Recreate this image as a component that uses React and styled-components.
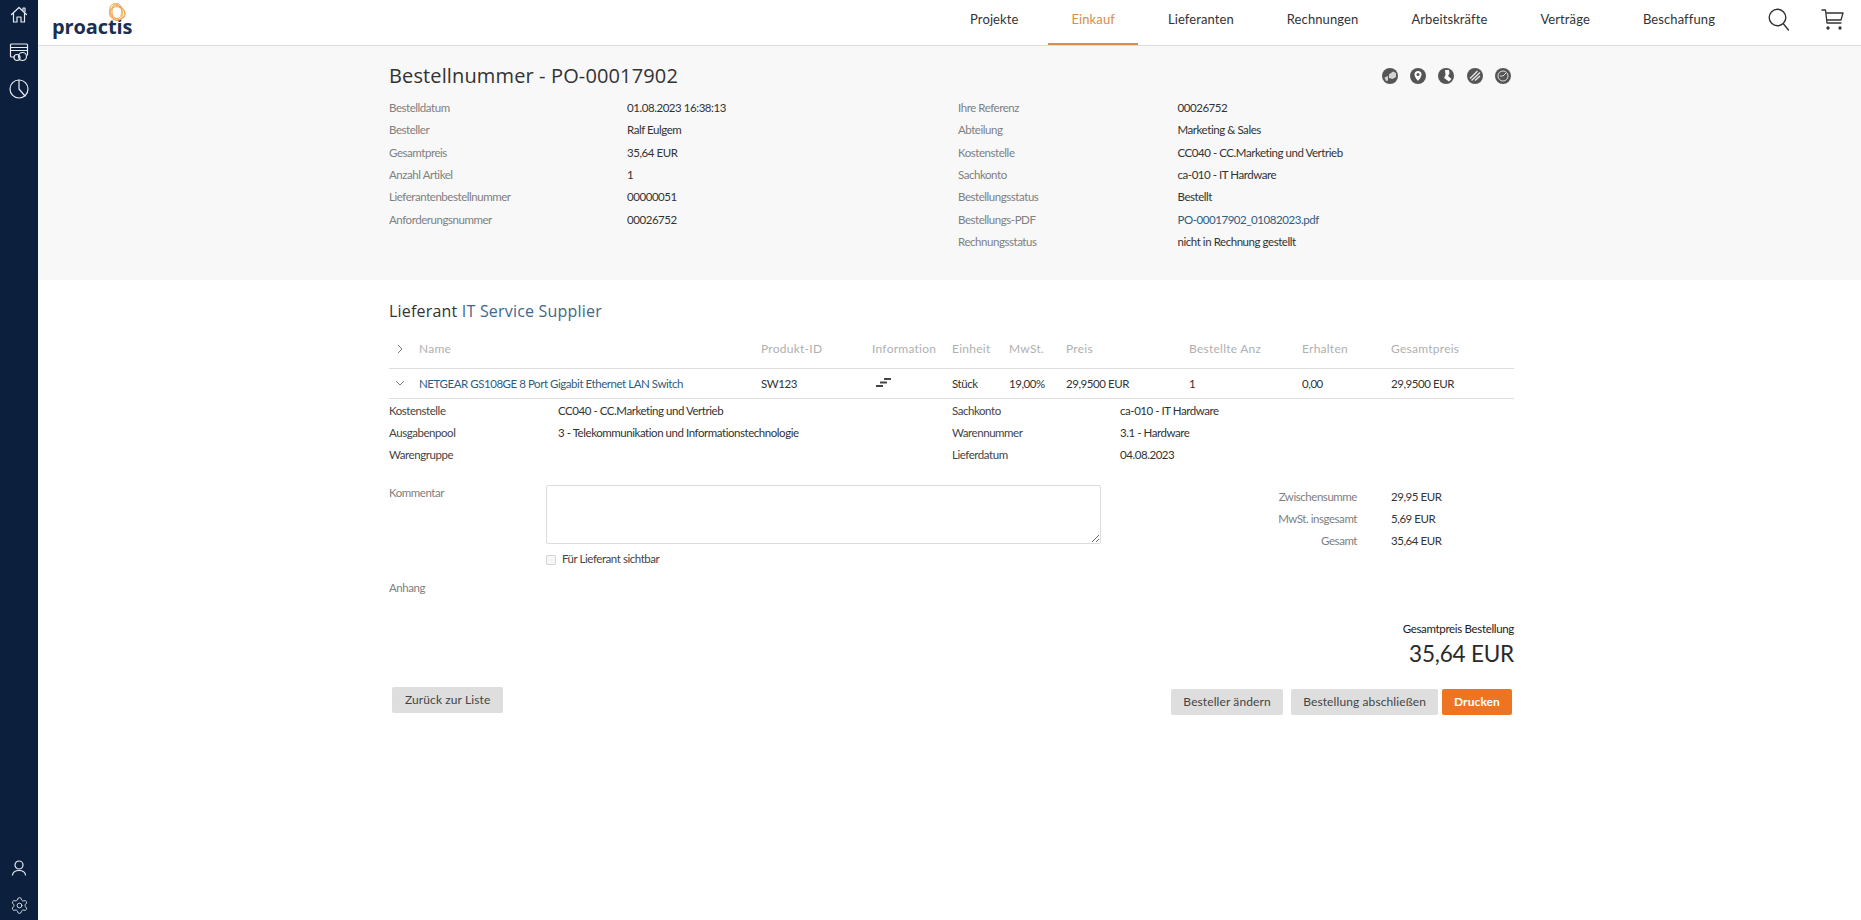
import React from "react";
import styled, { createGlobalStyle } from "styled-components";
import { Settings } from "lucide-react";

const GlobalStyle = createGlobalStyle`
  html, body {
    margin: 0;
    padding: 0;
    background: #fff;
    font-family: "Lato", "Liberation Sans", sans-serif;
    font-size: 11.5px;
    letter-spacing: -0.45px;
    color: #333;
  }
  * { box-sizing: border-box; }
`;

const Page = styled.div`
  display: flex;
  min-height: 100vh;
`;

const Sidebar = styled.aside`
  width: 38px;
  flex: none;
  height: 100vh;
  background: #0c1f3d;
  color: #e8ecf2;
  display: flex;
  flex-direction: column;
  justify-content: space-between;
  align-items: center;
  padding: 5px 0;
`;

const SideGroup = styled.div`
  display: flex;
  flex-direction: column;
  align-items: center;
  gap: ${(p) => p.$gap}px;
`;

const Main = styled.main`
  flex: 1;
  min-width: 0;
`;

const Header = styled.header`
  height: 46px;
  border-bottom: 1px solid #dcdcdc;
  display: flex;
  align-items: stretch;
  padding: 0 17px 0 14px;
`;

const Logo = styled.div`
  position: relative;
  width: 80px;
  font-family: "Open Sans", "Lato", sans-serif;
  font-size: 20px;
  line-height: 26px;
  font-weight: 700;
  letter-spacing: -0.1px;
  color: #1a2f50;
  padding-top: 14px;
`;

const LogoRings = styled.svg`
  position: absolute;
  left: 55px;
  top: 2px;
`;

const Nav = styled.nav`
  margin-left: auto;
  display: flex;
  gap: 7px;
`;

const NavItem = styled.a`
  padding: 0 23px;
  height: 45px;
  line-height: 39px;
  font-size: 13px;
  letter-spacing: 0.1px;
  color: ${(p) => (p.$active ? "#d98d45" : "#333")};
  border-bottom: 2px solid ${(p) => (p.$active ? "#d6904b" : "transparent")};
`;

const HeaderIcons = styled.div`
  display: flex;
  align-items: center;
  gap: 31px;
  margin: 0 0 6px 30px;
`;

const OrderPanel = styled.section`
  background: #f8f8f8;
  height: 234px;
  padding-top: 15px;
`;

const Inner = styled.div`
  width: 1125px;
  margin-left: 351px;
`;

const TitleRow = styled.div`
  display: flex;
  align-items: center;
  justify-content: space-between;
  height: 29px;
  padding-right: 3px;
  margin-bottom: 6.5px;
`;

const Title = styled.h1`
  margin: 0;
  font-family: "Open Sans", sans-serif;
  font-size: 20px;
  font-weight: 400;
  letter-spacing: 0.13px;
  color: #333;
`;

const ActionIcons = styled.div`
  display: flex;
  gap: 12.3px;
`;

const MetaColumns = styled.div`
  display: grid;
  grid-template-columns: 569px 1fr;
`;

const MetaList = styled.dl`
  margin: 0;
  display: grid;
  grid-template-columns: ${(p) => p.$label}px 1fr;
  grid-auto-rows: 22.33px;
  align-items: center;
`;

const MetaLabel = styled.dt`
  color: ${(p) => (p.$dark ? "#444" : "#808080")};
`;

const MetaValue = styled.dd`
  margin: 0;
  color: #333;
`;

const Link = styled.a`
  color: #2f5d7f;
`;

const SupplierTitle = styled.h2`
  margin: 20px 0 8px;
  height: 22px;
  line-height: 22px;
  font-family: "Open Sans", sans-serif;
  font-size: 16px;
  font-weight: 400;
  letter-spacing: 0.2px;
  color: #333;
`;

const SupplierName = styled.span`
  color: #41688a;
`;

const TableRow = styled.div`
  display: grid;
  grid-template-columns: 30px 342px 111px 80px 57px 57px 123px 113px 89px 123px;
  align-items: center;
  height: ${(p) => p.$height}px;
  padding-bottom: 1px;
  border-bottom: 1px solid #dedede;
  font-size: ${(p) => (p.$head ? "12px" : "inherit")};
  color: ${(p) => (p.$head ? "#b0b0b0" : "#333")};
  letter-spacing: ${(p) => (p.$head ? "0.25px" : "inherit")};
`;

const Chevron = styled.svg`
  margin-left: 6px;
  display: block;
`;

const InfoBars = styled.svg`
  margin-left: 4px;
`;

const Details = styled.div`
  display: grid;
  grid-template-columns: 563px 1fr;
`;

const CommentArea = styled.div`
  display: grid;
  grid-template-columns: 157px 555px 1fr;
  margin-top: 19px;
`;

const GreyLabel = styled.div`
  color: #808080;
  line-height: 14px;
  padding-top: ${(p) => p.$top || 0}px;
`;

const Comment = styled.textarea`
  display: block;
  width: 100%;
  height: 59px;
  border: 1px solid #dcdcdc;
  border-radius: 2px;
  background: #fff;
  margin: 0;
`;

const CheckRow = styled.label`
  display: flex;
  align-items: center;
  gap: 6px;
  height: 20px;
  margin-top: 5px;
  color: #444;
`;

const Check = styled.input`
  appearance: none;
  width: 10px;
  height: 10px;
  margin: 2px 0 0;
  border: 1px solid #d5d5d5;
  background: #f6f6f6;
  border-radius: 1px;
`;

const Totals = styled.dl`
  margin: 0;
  display: grid;
  grid-template-columns: 256px 1fr;
  column-gap: 34px;
  grid-auto-rows: 22.33px;
  align-items: center;
`;

const TotalLabel = styled.dt`
  color: #808080;
  text-align: right;
`;

const Attachment = styled(GreyLabel)`
  margin-top: 12px;
`;

const Grand = styled.div`
  text-align: right;
  margin-top: 25px;
`;

const GrandLabel = styled.div`
  line-height: 18px;
  letter-spacing: -0.33px;
  color: #222;
`;

const GrandValue = styled.div`
  font-size: 22.5px;
  line-height: 30px;
  font-weight: 400;
  letter-spacing: -0.2px;
  color: #2a2a2a;
  padding-top: 1px;
`;

const Actions = styled.div`
  display: flex;
  justify-content: space-between;
  align-items: flex-start;
  margin-top: 18px;
  padding: 0 2px 0 3px;
`;

const ButtonGroup = styled.div`
  display: flex;
  gap: ${(p) => p.$gap || 0}px;
  margin-top: ${(p) => p.$top || 0}px;
`;

const Button = styled.button`
  height: 26px;
  margin-left: ${(p) => p.$left || 0}px;
  padding: 0 ${(p) => p.$pad || 13}px;
  border: 0;
  border-radius: 2px;
  font-family: inherit;
  font-size: 12px;
  letter-spacing: 0.1px;
  background: ${(p) => (p.$primary ? "#ec7423" : "#dedede")};
  color: ${(p) => (p.$primary ? "#fff" : "#444")};
  font-weight: ${(p) => (p.$primary ? 700 : 400)};
`;

const metaLeft = [
  ["Bestelldatum", "01.08.2023 16:38:13"],
  ["Besteller", "Ralf Eulgem"],
  ["Gesamtpreis", "35,64 EUR"],
  ["Anzahl Artikel", "1"],
  ["Lieferantenbestellnummer", "00000051"],
  ["Anforderungsnummer", "00026752"],
];

const metaRight = [
  ["Ihre Referenz", "00026752"],
  ["Abteilung", "Marketing & Sales"],
  ["Kostenstelle", "CC040 - CC.Marketing und Vertrieb"],
  ["Sachkonto", "ca-010 - IT Hardware"],
  ["Bestellungsstatus", "Bestellt"],
  ["Bestellungs-PDF", <Link key="pdf">PO-00017902_01082023.pdf</Link>],
  ["Rechnungsstatus", "nicht in Rechnung gestellt"],
];

const navItems = ["Projekte", "Einkauf", "Lieferanten", "Rechnungen", "Arbeitskräfte", "Verträge", "Beschaffung"];
const headCols = ["Name", "Produkt-ID", "Information", "Einheit", "MwSt.", "Preis", "Bestellte Anz", "Erhalten", "Gesamtpreis"];

const thin = { fill: "none", stroke: "currentColor", strokeWidth: 1.2, strokeLinecap: "round", strokeLinejoin: "round" };

const HomeIcon = () => (
  <svg width="20" height="20" viewBox="0 0 20 20" {...thin}>
    <path d="M2.5 9.5 10 2.5l7.5 7M14 5V3h2v3.5M4.5 8.5V17H8v-5h4v5h3.5V8.5" />
  </svg>
);

const CardIcon = () => (
  <svg width="20" height="20" viewBox="0 0 20 20" {...thin}>
    <path d="M5 15H2.500a1 1 0 0 1-1-1V3a1 1 0 0 1 1-1h15a1 1 0 0 1 1 1v10M1.500 5.500h17M1.500 8.500h17" />
    <circle cx="8" cy="15.500" r="3" />
    <circle cx="13.500" cy="14.500" r="4" />
  </svg>
);

const PieIcon = () => (
  <svg width="20" height="20" viewBox="0 0 20 20" {...thin}>
    <circle cx="10" cy="10" r="9" />
    <path d="M10 1v9l6 7" />
  </svg>
);

const UserIcon = () => (
  <svg width="16" height="16" viewBox="0 0 16 16" {...thin}>
    <circle cx="8" cy="5" r="4" />
    <path d="M1.500 15c.5-3 3-4.500 6.500-4.500s6 1.500 6.500 4.500" />
  </svg>
);

const SearchIcon = () => (
  <svg width="22" height="23" viewBox="0 0 22 23" fill="none" stroke="#333" strokeWidth="1.4" strokeLinecap="round">
    <circle cx="9.500" cy="9.500" r="8.300" />
    <path d="m15.500 16 5 6" />
  </svg>
);

const CartIcon = () => (
  <svg width="23" height="23" viewBox="0 0 23 23" fill="none" stroke="#333" strokeWidth="1.3" strokeLinecap="round" strokeLinejoin="round">
    <path d="M1 2h3.500l1.500 13h14M5 5h17l-2 7H6" />
    <circle cx="7" cy="20" r="1" fill="#333" />
    <circle cx="19" cy="20" r="1" fill="#333" />
  </svg>
);

const RoundIcon = ({ children }) => (
  <svg width="16" height="16" viewBox="0 0 16 16">
    <circle cx="8" cy="8" r="8" fill="#555" />
    {children}
  </svg>
);

const Arrow = ({ open }) => (
  <Chevron width="10" height="10" viewBox="0 0 10 10" fill="none" stroke="#777" strokeWidth="1">
    <path d={open ? "M1 3l4 4 4-4" : "M3 1l4 4-4 4"} />
  </Chevron>
);

const App = () => (
  <Page>
    <GlobalStyle />
    <Sidebar>
      <SideGroup $gap={17}>
        <HomeIcon />
        <CardIcon />
        <PieIcon />
      </SideGroup>
      <SideGroup $gap={20}>
        <UserIcon />
        <Settings size={19} strokeWidth={1.1} />
      </SideGroup>
    </Sidebar>
    <Main>
      <Header>
        <Logo>
          proactis
          <LogoRings width="20" height="20" viewBox="0 0 20 20" fill="none" stroke="#efa345" strokeWidth="0.9">
            <ellipse cx="9" cy="10" rx="6" ry="8.500" transform="rotate(-20 9 10)" />
            <ellipse cx="11" cy="11" rx="7.500" ry="6" transform="rotate(25 11 11)" />
            <circle cx="10" cy="11" r="7.500" />
            <ellipse cx="10" cy="9" rx="5" ry="7.500" />
          </LogoRings>
        </Logo>
        <Nav>
          {navItems.map((item) => (
            <NavItem key={item} $active={item === "Einkauf"}>{item}</NavItem>
          ))}
        </Nav>
        <HeaderIcons>
          <SearchIcon />
          <CartIcon />
        </HeaderIcons>
      </Header>

      <OrderPanel>
        <Inner>
          <TitleRow>
            <Title>Bestellnummer - PO-00017902</Title>
            <ActionIcons>
              <RoundIcon>
                <path d="M2.500 9.500 6 8v4.500l-2 .500zM7 6.500 11 3.500l3 1.500v4l-3.500 2L7 10z" fill="#d4d4d4" />
              </RoundIcon>
              <RoundIcon>
                <path d="M8 3a3.500 3.500 0 0 1 3.500 3.500C11.500 9 8 13 8 13S4.500 9 4.500 6.500A3.500 3.500 0 0 1 8 3z" fill="#fff" />
                <circle cx="8" cy="6.500" r="1.500" fill="#555" />
              </RoundIcon>
              <RoundIcon>
                <path d="M7 2h4l.5 3.500-1.500 2.500 3.500 3-2.500 2.500-5-3.500 1.500-3z" fill="#fff" />
              </RoundIcon>
              <RoundIcon>
                <path d="M3 10.500 10.500 3M4.500 12.500 13 4.500M8 12.500l5-4.500" stroke="#e6e6e6" strokeWidth="1.4" />
              </RoundIcon>
              <RoundIcon>
                <circle cx="8" cy="8" r="5" fill="none" stroke="#ddd" strokeWidth="1" />
                <path d="M8 8l3-3M8 8H5" stroke="#ddd" strokeWidth="1" />
              </RoundIcon>
            </ActionIcons>
          </TitleRow>
          <MetaColumns>
            <MetaList $label={238}>
              {metaLeft.map(([label, value]) => (
                <React.Fragment key={label}>
                  <MetaLabel>{label}</MetaLabel>
                  <MetaValue>{value}</MetaValue>
                </React.Fragment>
              ))}
            </MetaList>
            <MetaList $label={219.5}>
              {metaRight.map(([label, value]) => (
                <React.Fragment key={label}>
                  <MetaLabel>{label}</MetaLabel>
                  <MetaValue>{value}</MetaValue>
                </React.Fragment>
              ))}
            </MetaList>
          </MetaColumns>
        </Inner>
      </OrderPanel>

      <Inner>
        <SupplierTitle>
          Lieferant <SupplierName>IT Service Supplier</SupplierName>
        </SupplierTitle>

        <TableRow $head $height={39}>
          <Arrow />
          {headCols.map((col) => (
            <span key={col}>{col}</span>
          ))}
        </TableRow>
        <TableRow $height={30}>
          <Arrow open />
          <Link>NETGEAR GS108GE 8 Port Gigabit Ethernet LAN Switch</Link>
          <span>SW123</span>
          <InfoBars width="16" height="10" viewBox="0 0 16 10" fill="#444">
            <rect x="8" y="0" width="7" height="2" />
            <rect x="4" y="3.500" width="7" height="2" />
            <rect x="0" y="7" width="7" height="2" />
          </InfoBars>
          <span>Stück</span>
          <span>19,00%</span>
          <span>29,9500 EUR</span>
          <span>1</span>
          <span>0,00</span>
          <span>29,9500 EUR</span>
        </TableRow>

        <Details>
          <MetaList $label={169}>
            <MetaLabel $dark>Kostenstelle</MetaLabel>
            <MetaValue>CC040 - CC.Marketing und Vertrieb</MetaValue>
            <MetaLabel $dark>Ausgabenpool</MetaLabel>
            <MetaValue>3 - Telekommunikation und Informationstechnologie</MetaValue>
            <MetaLabel $dark>Warengruppe</MetaLabel>
            <MetaValue />
          </MetaList>
          <MetaList $label={168}>
            <MetaLabel $dark>Sachkonto</MetaLabel>
            <MetaValue>ca-010 - IT Hardware</MetaValue>
            <MetaLabel $dark>Warennummer</MetaLabel>
            <MetaValue>3.1 - Hardware</MetaValue>
            <MetaLabel $dark>Lieferdatum</MetaLabel>
            <MetaValue>04.08.2023</MetaValue>
          </MetaList>
        </Details>

        <CommentArea>
          <GreyLabel $top={1}>Kommentar</GreyLabel>
          <div>
            <Comment />
            <CheckRow>
              <Check type="checkbox" />
              Für Lieferant sichtbar
            </CheckRow>
          </div>
          <Totals>
            <TotalLabel>Zwischensumme</TotalLabel>
            <MetaValue>29,95 EUR</MetaValue>
            <TotalLabel>MwSt. insgesamt</TotalLabel>
            <MetaValue>5,69 EUR</MetaValue>
            <TotalLabel>Gesamt</TotalLabel>
            <MetaValue>35,64 EUR</MetaValue>
          </Totals>
        </CommentArea>

        <Attachment>Anhang</Attachment>

        <Grand>
          <GrandLabel>Gesamtpreis Bestellung</GrandLabel>
          <GrandValue>35,64 EUR</GrandValue>
        </Grand>

        <Actions>
          <Button>Zurück zur Liste</Button>
          <ButtonGroup $top={2} $gap={4}>
            <Button $pad={12.5}>Besteller ändern</Button>
            <Button $left={4} $pad={12}>Bestellung abschließen</Button>
            <Button $primary $pad={12}>Drucken</Button>
          </ButtonGroup>
        </Actions>
      </Inner>
    </Main>
  </Page>
);

export default App;
